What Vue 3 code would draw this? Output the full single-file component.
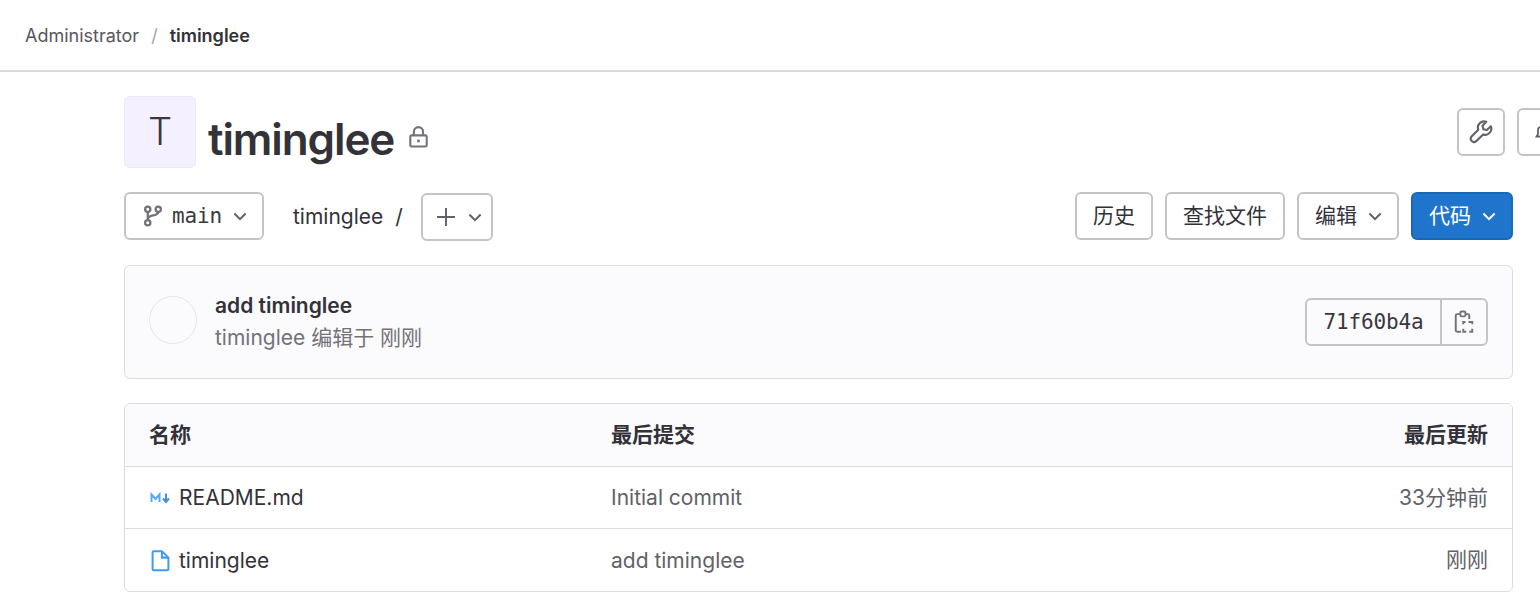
<script setup>
const rows = [
  { name: 'README.md', icon: 'md', commit: 'Initial commit', time: '33分钟前' },
  { name: 'timinglee', icon: 'file', commit: 'add timinglee', time: '刚刚' }
]
</script>

<template>
  <div class="page">
    <header class="crumbs">
      <span class="crumb">Administrator</span>
      <span class="sep">/</span>
      <strong class="crumb-current">timinglee</strong>
    </header>
    <main class="content">
      <section class="title-row">
        <div class="avatar">T</div>
        <h1 class="title">timinglee</h1>
        <svg class="lock" viewBox="0 0 16 16" fill="none" stroke="#737278" stroke-width="1.6">
          <rect x="1.750" y="6.750" width="12.500" height="8.500" rx="1" />
          <path d="M4.500 6.500V4a3.500 3.500 0 0 1 7 0v2.500" />
          <rect x="7" y="10" width="2" height="2" fill="#737278" stroke="none" />
        </svg>
        <div class="title-actions">
          <button class="btn icon-btn">
            <svg viewBox="0 0 16 16" class="ico20" fill="none" stroke="#626168" stroke-width="1.4" stroke-linejoin="round">
              <path d="M14.6 4.2l-2.7 2.500-2.300-.6-.6-2.300L11.500 1.200A4.100 4.100 0 0 0 6.200 6.500L1.700 11a2.200 2.200 0 0 0 3.100 3.100l4.600-4.500a4.100 4.100 0 0 0 5.200-5.400z" />
            </svg>
          </button>
          <button class="btn icon-btn">
            <svg viewBox="0 0 16 16" class="bell" fill="none" stroke="#626168" stroke-width="1.800">
              <path d="M8 3a3 3 0 0 0-3 3v4l-1.500 2.500h9L11 10V6a3 3 0 0 0-3-3z" />
            </svg>
          </button>
        </div>
      </section>

      <section class="toolbar">
        <button class="btn branch">
          <svg viewBox="0 0 16 16" class="branch-ico" fill="none" stroke="#737278" stroke-width="1.500">
            <circle cx="4.500" cy="3.500" r="1.750" />
            <circle cx="11.500" cy="3.500" r="1.750" />
            <circle cx="4.500" cy="12.500" r="1.750" />
            <path d="M4.500 5.250v5.500M11.500 5.250c0 3.250-7 1.500-7 5" />
          </svg>
          <span class="mono">main</span>
          <svg viewBox="0 0 16 16" class="chev" fill="none" stroke="#626168" stroke-width="1.600"><path d="M3.500 6l4.500 4.500L12.500 6" /></svg>
        </button>
        <span class="path">timinglee</span>
        <span class="path-sep">/</span>
        <button class="btn plus">
          <svg viewBox="0 0 16 16" class="plus-ico" fill="none" stroke="#626168" stroke-width="1.400"><path d="M8 1.500v13M1.500 8h13" /></svg>
          <svg viewBox="0 0 16 16" class="chev" fill="none" stroke="#626168" stroke-width="1.600"><path d="M3.500 6l4.500 4.500L12.500 6" /></svg>
        </button>
        <div class="toolbar-right">
          <button class="btn text-btn"><span class="cjk">历史</span></button>
          <button class="btn text-btn"><span class="cjk">查找文件</span></button>
          <button class="btn text-btn"><span class="cjk">编辑</span>
            <svg viewBox="0 0 16 16" class="chev" fill="none" stroke="#626168" stroke-width="1.600"><path d="M3.500 6l4.500 4.500L12.500 6" /></svg>
          </button>
          <button class="btn text-btn primary"><span class="cjk">代码</span>
            <svg viewBox="0 0 16 16" class="chev" fill="none" stroke="#fff" stroke-width="1.600"><path d="M3.500 6l4.500 4.500L12.500 6" /></svg>
          </button>
        </div>
      </section>

      <section class="commit">
        <div class="commit-avatar"></div>
        <div class="commit-info">
          <div class="commit-title">add timinglee</div>
          <div class="commit-meta">timinglee 编辑于 刚刚</div>
        </div>
        <div class="sha-group">
          <span class="sha">71f60b4a</span>
          <span class="copy">
            <svg viewBox="0 0 16 16" class="copy-ico" fill="none" stroke="#737278" stroke-width="1.300">
              <path d="M5 2.750H3.500a1 1 0 0 0-1 1V13.500a1 1 0 0 0 1 1H6" />
              <path d="M11.500 6V3.750a1 1 0 0 0-1-1H9" />
              <rect x="5.500" y="1" width="3.500" height="3.250" rx="1" />
              <path d="M9 8H7.500v1.500M11 8h2.500v1.500M13.500 12.500V14.500H11.500M9.500 14.500H7.500v-2" />
            </svg>
          </span>
        </div>
      </section>

      <section class="table">
        <div class="row head">
          <div class="c-name">名称</div>
          <div class="c-commit">最后提交</div>
          <div class="c-time">最后更新</div>
        </div>
        <div v-for="r in rows" :key="r.name" class="row">
          <div class="c-name file">
            <svg v-if="r.icon === 'md'" viewBox="0 0 20 16" class="md-ico" fill="none" stroke-width="2">
              <path d="M1.500 12V4.500L5.500 9l4-4.500V12" stroke="#52aaf5" />
              <path d="M16 3.500v8M13 8.500l3 3.500 3-3.500" stroke="#428fdc" />
            </svg>
            <svg v-else viewBox="0 0 16 16" class="file-ico" fill="none" stroke="#3d9cf0" stroke-width="1.400" stroke-linejoin="round">
              <path d="M3.500 1.500h5.500l4.500 4.500V14a.8.8 0 0 1-.8.8H3.300a.8.8 0 0 1-.8-.8V2.300a.8.8 0 0 1 .8-.8z" />
              <path d="M9 1.500V6h4.500" />
            </svg>
            <span>{{ r.name }}</span>
          </div>
          <div class="c-commit muted">{{ r.commit }}</div>
          <div class="c-time muted">{{ r.time }}</div>
        </div>
      </section>
    </main>
  </div>
</template>

<style scoped>
.page {
  width: 1540px;
  height: 610px;
  overflow: hidden;
  background: #fff;
  color: #333238;
  font-family: Inter, "Noto Sans CJK SC", sans-serif;
  font-size: 21px;
}
.crumbs {
  height: 72px;
  box-sizing: border-box;
  border-bottom: 2px solid #dcdcde;
  display: flex;
  align-items: center;
  padding: 0 0 0 25px;
  font-size: 18px;
}
.crumb { color: #57565c; }
.sep { color: #a4a3a8; margin: 0 12px; }
.crumb-current { font-weight: 600; color: #333238; }
.content { padding: 24px 0 0 124px; width: 1389px; }
.title-row { display: flex; align-items: center; width: 1441px; height: 72px; }
.avatar {
  width: 72px; height: 72px; box-sizing: border-box;
  background: #f4f0ff;
  border: 1px solid #e9e6f5;
  border-radius: 6px;
  display: flex; align-items: center; justify-content: center;
  font-size: 38px; font-weight: 300; color: #3a383f;
  padding-bottom: 2px;
}
.title {
  margin: 13px 0 0 12px;
  font-size: 44px; font-weight: 600; line-height: 56px; letter-spacing: -1.1px;
  color: #333238;
}
.lock { width: 21px; height: 22px; margin: 9px 0 0 14px; }
.title-actions { margin-left: auto; margin-top: -1px; display: flex; gap: 12px; }
.btn {
  box-sizing: border-box;
  background: #fff;
  border: 2px solid #c4c4c7;
  border-radius: 6px;
  height: 48px;
  display: inline-flex; align-items: center; justify-content: center;
  font-family: inherit; font-size: 21px; color: #333238;
  padding: 0;
}
.icon-btn { width: 48px; }
.ico20 { width: 24px; height: 24px; flex: none; }
.bell { width: 16px; height: 16px; flex: none; }
.chev { width: 20px; height: 20px; flex: none; }
.toolbar { display: flex; align-items: center; margin-top: 24px; height: 48px; }
.branch { width: 140px; justify-content: flex-start; padding-left: 15px; }
.branch-ico { width: 24px; height: 24px; flex: none; }
.branch .mono { margin-left: 7px; }
.branch .chev { margin-left: 8px; }
.mono { font-family: "DejaVu Sans Mono", "Liberation Mono", monospace; font-size: 21px; letter-spacing: -0.14px; color: #3a383f; }
.path { margin-left: 29px; color: #333238; }
.path-sep { margin: 0 18px 0 12px; color: #333238; }
.plus { width: 72px; margin-top: 2px; justify-content: flex-start; padding-left: 12px; }
.plus-ico { width: 22px; height: 22px; flex: none; }
.plus .chev { margin-left: 8px; }
.toolbar-right { margin-left: auto; display: flex; gap: 12px; }
.text-btn { padding: 0 16px; gap: 8px; }
.text-btn .chev { margin-right: -4px; }
.cjk { position: relative; top: -2px; }
.primary {
  background: #1f75cb; border-color: #1a68b8; color: #fff;
}
.commit {
  margin-top: 25px;
  height: 114px; box-sizing: border-box;
  background: #fbfafd;
  border: 1px solid #dcdcde;
  border-radius: 6px;
  display: flex; align-items: center;
  padding: 0 24px;
}
.commit-avatar {
  width: 48px; height: 48px; box-sizing: border-box;
  border-radius: 50%; border: 1px solid #e6e6e8; background: #fbfafd;
  margin-bottom: 4px;
}
.commit-info { margin-left: 18px; line-height: 32px; }
.commit-title { font-weight: 600; }
.commit-meta { color: #737278; }
.sha-group {
  margin-left: auto; display: flex; height: 48px; box-sizing: border-box;
  border: 2px solid #c4c4c7; border-radius: 6px; background: #fbfafd;
}
.sha {
  width: 135px; box-sizing: border-box;
  display: flex; align-items: center; justify-content: center;
  font-family: "DejaVu Sans Mono", "Liberation Mono", monospace; font-size: 21px; letter-spacing: -0.14px;
  color: #3a383f;
  border-right: 2px solid #c4c4c7;
}
.copy { width: 44px; display: flex; align-items: center; justify-content: center; }
.copy-ico { width: 24px; height: 24px; flex: none; }
.table {
  margin-top: 24px;
  border: 1px solid #dcdcde;
  border-radius: 6px;
  overflow: hidden;
}
.row {
  height: 62px; box-sizing: border-box;
  display: flex; align-items: center;
  padding: 0 24px;
  border-top: 1px solid #dcdcde;
}
.row:first-child { border-top: none; }
.row:last-child { height: 63px; }
.head { background: #fbfafd; font-weight: 600; height: 62px; padding-bottom: 4px; }
.c-name { width: 462px; }
.c-commit { flex: 1; }
.c-time { text-align: right; }
.c-time.muted { padding-bottom: 4px; }
.muted { color: #626168; }
.file { display: flex; align-items: center; color: #333238; }
.md-ico { width: 20px; height: 16px; margin: 0 9px 0 1px; }
.file-ico { width: 23px; height: 23px; margin-right: 7px; }
</style>
